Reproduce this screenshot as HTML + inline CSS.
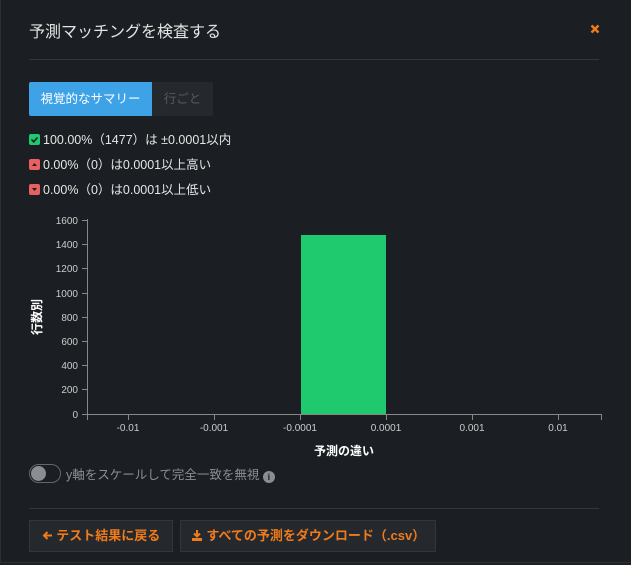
<!DOCTYPE html>
<html><head><meta charset="utf-8"><style>
*{margin:0;padding:0;box-sizing:border-box}
body{width:631px;height:565px;background:#1b1e22;font-family:"Liberation Sans","Noto Sans CJK JP",sans-serif;color:#e6e6e6;position:relative;overflow:hidden}
.frame{position:absolute;left:0;top:0;width:631px;height:563px;border-left:1px solid #2c3035;border-bottom:1px solid #2c3035}
.t{position:absolute;white-space:nowrap}
.hr{position:absolute;left:29px;width:570px;height:1px;background:#33373c}
.btn{position:absolute;top:520px;height:32px;background:#25292e;border:1px solid #33373c;color:#f07b1a;font-weight:bold;font-size:12.5px;line-height:30px;text-align:center}
.ico{display:inline-block;width:11px;height:11px;border-radius:2px;vertical-align:-1px;margin-right:3px;position:relative}
</style></head><body>
<div class="frame"></div>
<div class="t" style="left:29px;top:18px;font-size:16px;color:#e3e3e3">予測マッチングを検査する</div>
<svg class="t" style="left:590px;top:24px" width="10" height="10"><path d="M1.5 1.5 L8.5 8.5 M8.5 1.5 L1.5 8.5" stroke="#f07b1a" stroke-width="2.4"/></svg>
<div class="hr" style="top:59px"></div>
<div class="t" style="left:29px;top:82px;width:123px;height:34px;background:#3ea3e6;border-radius:2px 0 0 2px;color:#fff;font-size:12.5px;line-height:34px;text-align:center">視覚的なサマリー</div>
<div class="t" style="left:152px;top:82px;width:61px;height:34px;background:#25292e;color:#555a60;font-size:12.5px;line-height:34px;text-align:center">行ごと</div>
<div class="t" style="left:29px;top:129px;font-size:12.5px"><span class="ico" style="background:#1fc96d"><svg width="11" height="11" style="position:absolute;left:0;top:0"><path d="M2.5 5.5 L4.7 7.8 L8.5 3.5" stroke="#1b1e22" stroke-width="1.6" fill="none"/></svg></span>100.00%（1477）は ±0.0001以内</div>
<div class="t" style="left:29px;top:154px;font-size:12.5px"><span class="ico" style="background:#e8605f"><svg width="11" height="11" style="position:absolute;left:0;top:0"><path d="M3 7 L5.5 4 L8 7Z" fill="#1b1e22"/></svg></span>0.00%（0）は0.0001以上高い</div>
<div class="t" style="left:29px;top:179px;font-size:12.5px"><span class="ico" style="background:#e8605f"><svg width="11" height="11" style="position:absolute;left:0;top:0"><path d="M3 4 L5.5 7 L8 4Z" fill="#1b1e22"/></svg></span>0.00%（0）は0.0001以上低い</div>
<svg width="631" height="470" style="position:absolute;left:0;top:0" font-family="Liberation Sans, sans-serif" font-size="10" fill="#ccc">
<rect x="301" y="235" width="85" height="179" fill="#1fc96d"/>
<g stroke="#888" stroke-width="1">
<line x1="87.5" y1="219" x2="87.5" y2="414"/>
<line x1="82" y1="414.5" x2="602" y2="414.5"/>
<line x1="87.5" y1="414" x2="87.5" y2="420"/><line x1="601.5" y1="414" x2="601.5" y2="420"/>
<line x1="128.5" y1="414" x2="128.5" y2="420"/><line x1="214.5" y1="414" x2="214.5" y2="420"/>
<line x1="300.5" y1="414" x2="300.5" y2="420"/><line x1="386.5" y1="414" x2="386.5" y2="420"/>
<line x1="472.5" y1="414" x2="472.5" y2="420"/><line x1="558.5" y1="414" x2="558.5" y2="420"/>
<line x1="82" y1="220.5" x2="87" y2="220.5"/><line x1="82" y1="244.5" x2="87" y2="244.5"/>
<line x1="82" y1="268.5" x2="87" y2="268.5"/><line x1="82" y1="293.5" x2="87" y2="293.5"/>
<line x1="82" y1="317.5" x2="87" y2="317.5"/><line x1="82" y1="341.5" x2="87" y2="341.5"/>
<line x1="82" y1="365.5" x2="87" y2="365.5"/><line x1="82" y1="389.5" x2="87" y2="389.5"/>
</g>
<g text-anchor="end">
<text x="78" y="224">1600</text><text x="78" y="248">1400</text><text x="78" y="272">1200</text>
<text x="78" y="297">1000</text><text x="78" y="321">800</text><text x="78" y="345">600</text>
<text x="78" y="369">400</text><text x="78" y="393">200</text><text x="78" y="418">0</text>
</g>
<g text-anchor="middle">
<text x="128" y="431">-0.01</text><text x="214" y="431">-0.001</text><text x="300" y="431">-0.0001</text>
<text x="386" y="431">0.0001</text><text x="472" y="431">0.001</text><text x="558" y="431">0.01</text>
</g>
<text x="344" y="455" text-anchor="middle" font-size="12" font-weight="bold" fill="#fff" font-family="Liberation Sans, Noto Sans CJK JP, sans-serif">予測の違い</text>
<text transform="translate(41,317) rotate(-90)" text-anchor="middle" font-size="12" font-weight="bold" fill="#fff" font-family="Liberation Sans, Noto Sans CJK JP, sans-serif">行数別</text>
</svg>
<div class="t" style="left:29px;top:464px;width:32px;height:19px;border:1px solid #666;border-radius:10px"></div>
<div class="t" style="left:31px;top:466px;width:15px;height:15px;border-radius:50%;background:#8a8e93"></div>
<div class="t" style="left:66px;top:464px;font-size:12.5px;color:#8a8e93">y軸をスケールして完全一致を無視 <span style="display:inline-block;width:12px;height:12px;border-radius:50%;background:#8a8e93;color:#1b1e22;font-size:9px;line-height:12px;text-align:center;font-weight:bold;vertical-align:-1px">i</span></div>
<div class="hr" style="top:508px"></div>
<div class="btn" style="left:29px;width:144px;font-size:13px"><svg width="11" height="11" style="vertical-align:-1px"><path d="M10 5.5 H2 M5.5 2 L2 5.5 L5.5 9" stroke="#f07b1a" stroke-width="2" fill="none"/></svg> テスト結果に戻る</div>
<div class="btn" style="left:180px;width:256px;font-size:13px"><svg width="12" height="12" style="vertical-align:-1px"><path d="M6 1 V7 M3 4.5 L6 7.5 L9 4.5" stroke="#f07b1a" stroke-width="2" fill="none"/><rect x="1" y="9" width="10" height="3" fill="#f07b1a"/></svg> すべての予測をダウンロード（.csv）</div>
</body></html>
